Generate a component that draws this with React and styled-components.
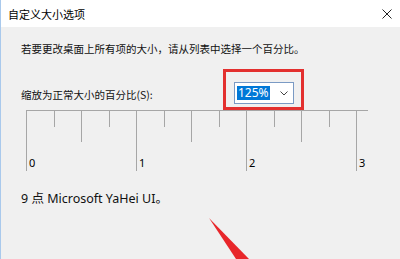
import React from "react";
import styled, { createGlobalStyle } from "styled-components";

const Global = createGlobalStyle`
  html, body { margin: 0; padding: 0; background: #f0f0f0; }
  body { font-family: "Noto Sans", "Noto Sans CJK SC", sans-serif; }
`;

const Window = styled.div`
  position: relative;
  width: 400px;
  height: 259px;
  overflow: hidden;
  background: #f0f0f0;
  box-sizing: border-box;
  border-left: 1px solid #a9c9ec;
  display: flex;
  flex-direction: column;
`;

const TitleBar = styled.div`
  height: 27px;
  flex: none;
  background: #ffffff;
  display: flex;
  align-items: center;
  justify-content: space-between;
  padding: 0 7px 0 7px;
`;

const Title = styled.span`
  font-family: "Noto Sans CJK SC", sans-serif;
  font-size: 11px;
  color: #000;
  line-height: 14px;
`;

const CloseButton = styled.div`
  width: 12px;
  height: 12px;
  display: flex;
  align-items: center;
  justify-content: center;
`;

const Body = styled.div`
  padding: 14px 0 0 20px;
  display: flex;
  flex-direction: column;
`;

const Intro = styled.div`
  font-family: "Noto Sans CJK SC", sans-serif;
  font-size: 10.5px;
  line-height: 16px;
  color: #111;
  white-space: nowrap;
`;

const ScaleRow = styled.div`
  margin-top: 12px;
  display: grid;
  grid-template-columns: 202px auto;
  align-items: end;
`;

const Label = styled.span`
  font-family: "Noto Sans CJK SC", sans-serif;
  font-size: 10.5px;
  line-height: 22px;
  margin-bottom: 4px;
  color: #111;
  white-space: nowrap;
`;

const Highlight = styled.div`
  width: 81px;
  height: 41px;
  box-sizing: border-box;
  border: 3px solid #e3302f;
  padding: 10px 7px 2px 8px;
`;

const Combo = styled.div`
  width: 60px;
  height: 22px;
  box-sizing: border-box;
  border: 1px solid #7a9ac4;
  background: #ffffff;
  display: flex;
  align-items: center;
  justify-content: space-between;
  padding: 0 5px 0 2px;
`;

const Selected = styled.span`
  background: #0078d7;
  color: #ffffff;
  font-family: "Noto Sans", sans-serif;
  font-size: 12px;
  line-height: 14px;
  padding: 0 1px;
`;

const Ruler = styled.svg`
  display: block;
  margin-left: 4px;
  width: 350px;
  height: 63px;
`;

const FontInfo = styled.div`
  margin-top: 17px;
  font-family: "Noto Sans", "Noto Sans CJK SC", sans-serif;
  font-size: 12.5px;
  line-height: 18px;
  color: #111;
  white-space: nowrap;
`;

const Arrow = styled.svg`
  position: absolute;
  left: 200px;
  top: 210px;
  width: 60px;
  height: 49px;
`;

const ticks = Array.from({ length: 13 }, (_, k) => k);

export default function App() {
  return (
    <>
      <Global />
      <Window>
        <TitleBar>
          <Title>自定义大小选项</Title>
          <CloseButton>
            <svg width="10" height="10" viewBox="0 0 10 10">
              <path d="M0.5 0.5 L9.5 9.5 M9.5 0.5 L0.5 9.5" stroke="#222" strokeWidth="1" fill="none" />
            </svg>
          </CloseButton>
        </TitleBar>
        <Body>
          <Intro>若要更改桌面上所有项的大小，请从列表中选择一个百分比。</Intro>
          <ScaleRow>
            <Label>缩放为正常大小的百分比(S):</Label>
            <Highlight>
              <Combo>
                <Selected>125%</Selected>
                <svg width="8" height="5" viewBox="0 0 8 5">
                  <path d="M0.5 0.5 L4 4 L7.5 0.5" stroke="#444" strokeWidth="1" fill="none" />
                </svg>
              </Combo>
            </Highlight>
          </ScaleRow>
          <Ruler viewBox="0 0 350 63">
            <line x1="1" y1="0.5" x2="343" y2="0.5" stroke="#a6a6a6" strokeWidth="1" />
            {ticks.map((k) => {
              const x = Math.round(1 + 27.5 * k) + 0.5;
              const len = k % 4 === 0 ? 61 : k % 2 === 0 ? 32 : 17;
              return <line key={k} x1={x} y1="0" x2={x} y2={len} stroke="#a6a6a6" strokeWidth="1" />;
            })}
            {[0, 1, 2, 3].map((n) => (
              <text
                key={n}
                x={Math.round(1 + 110 * n) + 3}
                y="57"
                fontFamily="Noto Sans, sans-serif"
                fontSize="11"
                fill="#000"
              >
                {n}
              </text>
            ))}
          </Ruler>
          <FontInfo>9 点 Microsoft YaHei UI。</FontInfo>
        </Body>
        <Arrow viewBox="0 0 60 49">
          <polygon points="8,8 48,49 35,49" fill="#e8262a" />
        </Arrow>
      </Window>
    </>
  );
}
